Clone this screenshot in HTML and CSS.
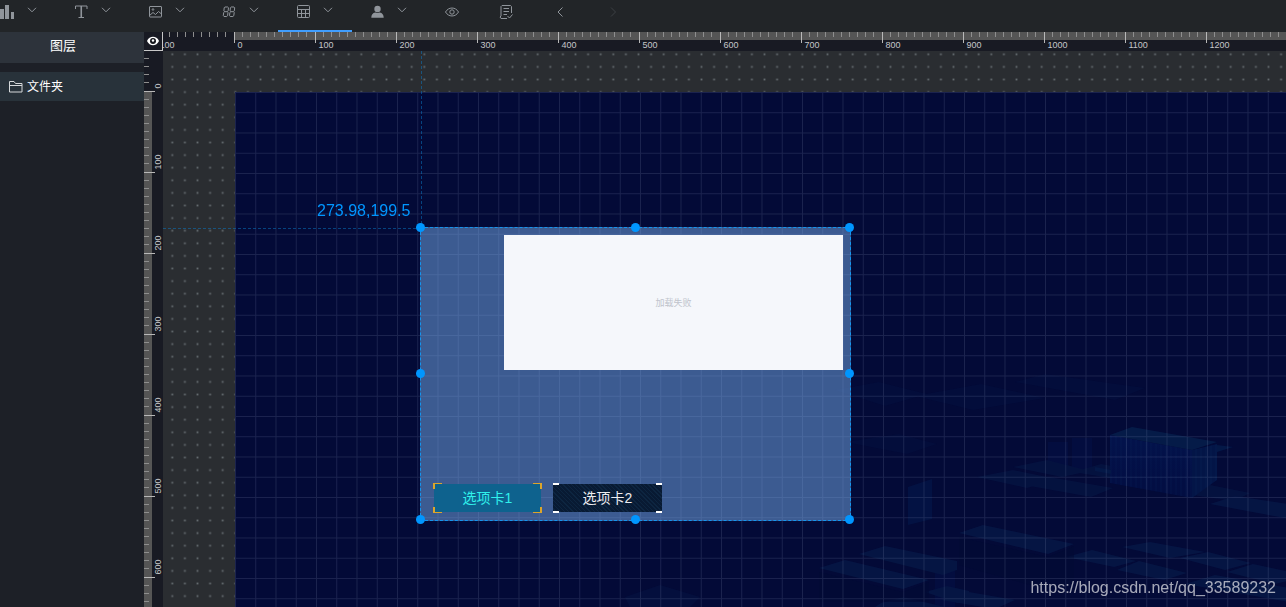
FILE: index.html
```
<!DOCTYPE html>
<html lang="zh-CN">
<head>
<meta charset="utf-8">
<title>图层</title>
<link rel="stylesheet" href="styles.css">
</head>
<body>
<svg class="defs" aria-hidden="true">
  <symbol id="chevron" viewBox="0 0 10 6"><path d="M1 .8l4 4 4-4"/></symbol>
</svg>
<nav class="toolbar">
  <button class="tool" aria-label="Chart">
    <svg class="icon solid" viewBox="0 0 16 16"><path d="M1 5h4v10H1zM6 1h4v14H6zM12 8h3v7h-3z"/></svg>
    <svg class="chevron"><use href="#chevron"/></svg>
  </button>
  <button class="tool" aria-label="Text">
    <svg class="icon" viewBox="0 0 16 16"><path d="M2.500 5V2h11.500v3M5.500 13.500h5.500"/><path d="M8.250 2v11.500" stroke-width="1.600"/></svg>
    <svg class="chevron"><use href="#chevron"/></svg>
  </button>
  <button class="tool" aria-label="Image">
    <svg class="icon" viewBox="0 0 16 16"><rect x="2.500" y="2.500" width="12" height="10.500" rx=".5"/><path d="M2.500 11.500l3.500-3 2.500 2 3-3 3 2.500"/><circle cx="6" cy="5.500" r=".8"/></svg>
    <svg class="chevron"><use href="#chevron"/></svg>
  </button>
  <button class="tool" aria-label="Digits">
    <svg class="icon" viewBox="0 0 16 16"><path d="M4 3h2.800l.7.700-.400 3.200-.800.800.7.800-.400 3.200-.9.800H3l-.7-.8.400-3.200.9-.800-.700-.800.300-3.200zM3.600 7.700h2.700M10.200 3H13l.7.700-.400 3.200-.800.800.7.800-.400 3.200-.9.800H9.200l-.7-.8.400-3.200.9-.800-.700-.800.300-3.200zM9.800 7.700h2.700"/></svg>
    <svg class="chevron"><use href="#chevron"/></svg>
  </button>
  <button class="tool active" aria-label="Table">
    <svg class="icon" viewBox="0 0 16 16"><rect x="2.500" y="1.500" width="12" height="12" rx="1"/><path d="M2.500 5.500h12M2.500 9.500h12M6.500 5.500v8M10.500 5.500v8"/></svg>
    <svg class="chevron"><use href="#chevron"/></svg>
  </button>
  <button class="tool" aria-label="User">
    <svg class="icon solid" viewBox="0 0 16 16"><circle cx="8.500" cy="5" r="3.200"/><path d="M8.500 9l2.200-.6c2.600.5 4 2.100 4 5.400H2.300c0-3.300 1.400-4.900 4-5.400z"/></svg>
    <svg class="chevron"><use href="#chevron"/></svg>
  </button>
  <button class="tool single" aria-label="Preview">
    <svg class="icon" viewBox="0 0 16 16"><path d="M1.500 8C4.500 2.700 11.500 2.700 14.500 8 11.500 13.300 4.500 13.300 1.500 8z"/><circle cx="8" cy="8" r="2.200"/></svg>
  </button>
  <button class="tool single" aria-label="Save">
    <svg class="icon" viewBox="0 0 16 16"><path d="M13.500 9V2.500l-1-1H4l-1 1V12l-1 1 1 1.500h6M5.500 4.500h5.500M5.500 7.500h5.500M5.500 10.500h3.500M9.500 12l2 2 3-3.500"/></svg>
  </button>
  <button class="tool single" aria-label="Undo">
    <svg class="icon" viewBox="0 0 16 16"><path d="M10.500 3.500L6 8l4.500 4.500"/></svg>
  </button>
  <button class="tool single" aria-label="Redo" disabled>
    <svg class="icon" viewBox="0 0 16 16"><path d="M5 3.500L9.500 8 5 12.500"/></svg>
  </button>
</nav>
<div class="main">
  <aside class="layers">
    <h1 class="layers-title">图层</h1>
    <button class="folder">
      <svg class="folder-icon" viewBox="0 0 14 12"><path d="M.500 11V.5h4.500l1.500 2h6.500V11zM.500 4.500h12.500"/></svg>
      文件夹
    </button>
  </aside>
  <div class="editor">
    <button class="corner" aria-label="Guides">
      <svg class="corner-eye" viewBox="0 0 12 10"><path fill="#fff" d="M0 5C2.500-.6 9.500-.6 12 5 9.500 10.600 2.500 10.600 0 5z"/><circle cx="6" cy="5" r="3" fill="#14161c"/><circle cx="6" cy="4.500" r="1.200" fill="#fff"/></svg>
    </button>
    <svg class="ruler ruler-x" id="ruler-x"></svg>
    <svg class="ruler ruler-y" id="ruler-y"></svg>
    <main class="workspace">
      <svg class="dots" aria-hidden="true">
        <defs><pattern id="dot" width="14" height="14" patternUnits="userSpaceOnUse" patternTransform="translate(3 -3) scale(.9)"><rect x="6" y="6" width="2" height="2" fill="#646b6f"/></pattern></defs>
        <rect width="100%" height="100%" fill="url(#dot)"/>
      </svg>
      <div class="screen">
        <svg class="scene" aria-hidden="true">
          <defs>
            <pattern id="cell" width="25" height="25" patternUnits="userSpaceOnUse" patternTransform="scale(.81)"><path d="M0 .6H25M.6 0V25" stroke="#9aa8d0" stroke-opacity=".16" stroke-width="1.200"/></pattern>
            <pattern id="rib" width="5" height="5" patternUnits="userSpaceOnUse"><path d="M1 0V5" stroke="#0a3a70" stroke-opacity=".2"/></pattern>
            <linearGradient id="side" x2="0" y2="1"><stop stop-color="#041552"/><stop offset="1" stop-color="#030e44"/></linearGradient>
          </defs>
          <g opacity=".8">
            <g fill="#061242" opacity=".5">
              <path d="M600 298l44-8 48 12-42 12zM680 304l66-12 64 14-72 12zM780 290l30-8 100 14-30 12zM610 350l54-8 38 10-30 10z"/>
            </g>
            <g fill="#040e42">
              <path d="M813 350h20v28h-20zM837 346h20v32h-20zM700 470h20v68h-20zM560 530h20v62h-20z"/>
            </g>
            <path fill="#041546" d="M673 395l24-8v40l-24 6z"/>
            <g fill="#061442">
              <path d="M742 385l36-7 44 9-30 9zM778 375l34-7 43 11-28 6zM784 392l30-7 64 11-22 9zM838 380l28-8 60 11-20 8zM877 387l28-8 64 14-25 8zM922 398l33-9 60 12-16 8z"/>
            </g>
            <g>
              <path fill="url(#side)" d="M875 343l82 15v48l-82-15z"/>
              <path fill="#04184c" d="M957 358l25-6v36l-25 18z"/>
              <path fill="url(#rib)" d="M875 343l82 15 25-6v36l-25 18-82-15z"/>
              <path fill="#07204d" d="M875 343l22-8 85 15-25 8z"/>
              <path fill="#051c4c" d="M982 353l16 2-16 5zM860 375l16 3v4l-16-3z"/>
            </g>
            <g fill="#071847">
              <path d="M975 412l25-8 60 9v15z"/>
              <path d="M724 441l24-8 91 19-26 10z"/>
              <path d="M831 465l26-7 44 11-22 6zM882 478l22-9 48 12-23 7zM945 466l28-6 43 11-26 7zM992 480l26-8 42 9v6l-20 5zM887 455l28-5 55 10-35 6z"/>
              <path d="M624 462l26-8 72 15v9l-14 5z"/>
              <path d="M584 476l26-8 84 20-26 9zM690 500l22-6 22 5v8l-12 4zM706 508l28-8 46 8-20 9zM646 511l22-6 42 10H640z"/>
              <path opacity=".5" d="M390 505l35-12 40 12-10 10h-60z"/>
              <path d="M950 492l30-9 80 14v14z"/>
            </g>
            <path fill="#030b35" fill-opacity=".7" d="M724 445l89 20 26-11v36l-26 8-89-25zM584 480l84 20 26-10v20H584z"/>
          </g>
          <rect width="100%" height="100%" fill="url(#cell)"/>
        </svg>
      </div>
      <div class="guide guide-x"></div>
      <div class="guide guide-y"></div>
      <output class="position">273.98,199.5</output>
      <section class="selection">
        <div class="panel">加载失败</div>
        <div class="tabs">
          <button class="tab current"><i class="mark tl"></i><i class="mark tr"></i><i class="mark bl"></i><i class="mark br"></i>选项卡1</button>
          <button class="tab"><i class="mark tl"></i><i class="mark tr"></i><i class="mark bl"></i><i class="mark br"></i>选项卡2</button>
        </div>
        <span class="handle n w"></span><span class="handle n c"></span><span class="handle n e"></span>
        <span class="handle m w"></span><span class="handle m e"></span>
        <span class="handle s w"></span><span class="handle s c"></span><span class="handle s e"></span>
      </section>
    </main>
  </div>
  <div class="watermark">https://blog.csdn.net/qq_33589232</div>
</div>
<script src="rulers.js"></script>
</body>
</html>
```

FILE: styles.css
```
* { box-sizing: border-box; }
body {
  margin: 0;
  height: 100vh;
  display: flex;
  flex-direction: column;
  overflow: hidden;
  background: #1d2027;
  color: #fff;
  font: 12px/18px "Liberation Sans", "Noto Sans CJK SC", sans-serif;
}
button { padding: 0; border: 0; background: none; color: inherit; font: inherit; }
.defs { position: absolute; width: 0; height: 0; }

.toolbar { display: flex; flex: none; height: 32px; margin-left: -18px; background: #222528; overflow: hidden; }
.tool {
  display: flex;
  flex: none;
  align-items: flex-start;
  gap: 12px;
  width: 74px;
  padding: 4px 0 0 17px;
  color: #90959b;
  border-bottom: 2px solid transparent;
}
.tool.active { border-color: #409eff; }
.tool.single { width: 54px; padding-left: 18px; }
.tool:disabled { color: #3c4044; }
.icon { width: 16px; height: 16px; fill: none; stroke: currentColor; }
.icon.solid { fill: currentColor; stroke: none; }
.chevron { width: 10px; height: 6px; margin-top: 3px; fill: none; stroke: currentColor; }

.main { position: relative; display: flex; flex: 1; min-height: 0; }
.layers { flex: none; width: 144px; background: #1d2027; }
.layers-title {
  margin: 0 0 9px;
  padding: 4px 18px 7px 0;
  background: #2d333b;
  font-size: 13px;
  line-height: 20px;
  font-weight: 400;
  text-align: center;
}
.folder { display: flex; align-items: center; gap: 4px; width: 100%; height: 29px; padding-left: 9px; background: #28323a; }
.folder-icon { width: 14px; height: 12px; fill: none; stroke: #d5d8da; }

.editor { flex: 1; min-width: 0; display: grid; grid-template: 19px minmax(0, 1fr) / 19px minmax(0, 1fr); background: #181a23; }
.corner { display: grid; place-items: center; border: solid #c8c8c8; border-width: 0 1px 1px 0; }
.corner-eye { width: 12px; height: 10px; }
.ruler { width: 100%; height: 100%; overflow: hidden; }
.ruler .band { fill: #555; }
.ruler .minor { stroke: #8e8e8e; }
.ruler .major { stroke: #b8b8b8; }
.ruler text { fill: #c4c6c8; font-size: 9px; }

.workspace { position: relative; display: flex; overflow: hidden; background: #2a2d31; }
.dots { position: absolute; width: 100%; height: 100%; }
.screen { position: relative; flex: 1; margin: 41px 0 0 72px; background: #030a37; }
.scene { position: absolute; width: 100%; height: 100%; }

.guide { position: absolute; opacity: .5; }
.guide-x { left: 0; top: 177px; width: 257px; height: 1px; background: repeating-linear-gradient(90deg, #0a7bc8 0 3px, transparent 3px 5px); }
.guide-y { left: 258px; top: 0; width: 1px; height: 176px; background: repeating-linear-gradient(#0a7bc8 0 3px, transparent 3px 5px); }
.position { position: absolute; left: 154px; top: 151px; color: #0096ff; font-size: 16px; line-height: 18px; }

.selection {
  position: absolute;
  left: 257px;
  top: 176px;
  width: 431px;
  height: 294px;
  display: flex;
  flex-direction: column;
  justify-content: space-between;
  padding: 7px;
  border: 1px dashed #1495ee;
  background: rgba(117, 171, 235, .5);
}
.panel {
  display: grid;
  place-items: center;
  width: 339px;
  height: 135px;
  align-self: flex-end;
  background: #f5f7fb;
  color: #c0c4cc;
  font-size: 9px;
}
.tabs { display: flex; gap: 11px; padding-left: 5px; }
.tab {
  position: relative;
  width: 109px;
  height: 30px;
  border: solid transparent;
  border-width: 1px 0;
  background: repeating-linear-gradient(45deg, #081a33 0 2px, #0d2540 2px 3px) padding-box;
  color: #ececf0;
  font-size: 14px;
}
.tab.current { border-width: 1px; background: #0e628e padding-box; color: #30f1ec; }
.mark { position: absolute; width: 6px; height: 2px; background: #fff; }
.tl, .tr { top: -1px; }
.bl, .br { bottom: -1px; }
.tl, .bl { left: 0; }
.tr, .br { right: 0; }
.current .mark { width: 9px; height: 6px; background: none; border: 0 solid #dca52a; }
.current .tl, .current .bl { left: -1px; border-left-width: 2px; }
.current .tr, .current .br { right: -1px; border-right-width: 2px; }
.current .tl, .current .tr { border-top-width: 1px; }
.current .bl, .current .br { border-bottom-width: 1px; }

.handle { position: absolute; width: 9px; height: 9px; border-radius: 50%; background: #0096ff; }
.n { top: -5px; }
.m { top: calc(50% - 5px); }
.s { bottom: -4px; }
.w { left: -5px; }
.c { left: calc(50% - 5px); }
.e { right: -4px; }

.watermark { position: absolute; right: 10px; bottom: 9px; color: rgba(235, 235, 240, .7); font-size: 16px; line-height: 20px; }
```

FILE: rulers.js
```
const SCALE = 0.81;
const NS = "http://www.w3.org/2000/svg";

function add(parent, name, attrs, text) {
  const el = document.createElementNS(NS, name);
  for (const key in attrs) el.setAttribute(key, attrs[key]);
  if (text !== undefined) el.textContent = text;
  parent.appendChild(el);
}

function drawRuler(svg, origin, vertical) {
  svg.replaceChildren();
  const length = vertical ? svg.clientHeight : svg.clientWidth;
  const band = vertical
    ? { x: 0, y: origin, width: 8, height: length }
    : { x: origin, y: 0, width: length, height: 8 };
  add(svg, "rect", { class: "band", ...band });
  const start = vertical ? -40 : -100;
  for (let value = start; value * SCALE + origin < length; value += 10) {
    const at = Math.floor(value * SCALE + origin) + 0.5;
    const major = value % 100 === 0;
    const size = major ? 11 : 5;
    const line = vertical
      ? { x1: 0, y1: at, x2: size, y2: at }
      : { x1: at, y1: 0, x2: at, y2: size };
    add(svg, "line", { class: major ? "major" : "minor", ...line });
    if (major) {
      const place = vertical
        ? { transform: `translate(17 ${at - 3}) rotate(-90)` }
        : { x: at + 3, y: 16 };
      add(svg, "text", place, value);
    }
  }
}

function drawRulers() {
  drawRuler(document.getElementById("ruler-x"), 71, false);
  drawRuler(document.getElementById("ruler-y"), 40, true);
}

drawRulers();
addEventListener("resize", drawRulers);
```
